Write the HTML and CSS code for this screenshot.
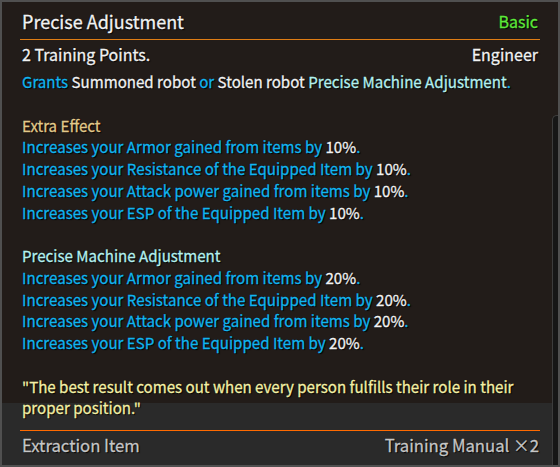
FILE: index.html
```html
<!DOCTYPE html>
<html lang="en">
<head>
  <meta charset="UTF-8" />
  <title>Precise Adjustment</title>
  <link rel="stylesheet" href="styles.css">
</head>
<body>
  <div class="tooltip">
    <div class="content">
      <div class="head">
        <span class="title">Precise Adjustment</span>
        <span class="grade">Basic</span>
      </div>
      <div class="sub">
        <span>2 Training Points.</span>
        <span>Engineer</span>
      </div>
      <div class="desc">
        <p><span class="blue">Grants</span> Summoned robot <span class="blue">or</span> Stolen robot <span class="mint">Precise Machine Adjustment</span><span class="blue">.</span></p>
        <p class="gap"></p>
        <p class="gold">Extra Effect</p>
        <p class="blue">Increases your Armor gained from items by <span class="white">10%</span>.</p>
        <p class="blue">Increases your Resistance of the Equipped Item by <span class="white">10%</span>.</p>
        <p class="blue">Increases your Attack power gained from items by <span class="white">10%</span>.</p>
        <p class="blue">Increases your ESP of the Equipped Item by <span class="white">10%</span>.</p>
        <p class="gap"></p>
        <p class="mint">Precise Machine Adjustment</p>
        <p class="blue">Increases your Armor gained from items by <span class="white">20%</span>.</p>
        <p class="blue">Increases your Resistance of the Equipped Item by <span class="white">20%</span>.</p>
        <p class="blue">Increases your Attack power gained from items by <span class="white">20%</span>.</p>
        <p class="blue">Increases your ESP of the Equipped Item by <span class="white">20%</span>.</p>
        <p class="gap"></p>
        <p class="quote">"The best result comes out when every person fulfills their role in their proper position."</p>
      </div>
      <div class="foot">
        <span>Extraction Item</span>
        <span>Training Manual ×2</span>
      </div>
    </div>
    <div class="scroll">
      <div class="thumb"></div>
    </div>
  </div>
</body>
</html>
```

FILE: styles.css
```css
body {
  margin: 0;
  background-color: #1a1a1a;
  font-family: "Noto Sans CJK KR", "Noto Sans", sans-serif;
}

.tooltip {
  box-sizing: border-box;
  width: 560px;
  height: 467px;
  border: 2px solid #505050;
  background-color: #221c19;
  display: flex;
  color: #f2f2f2;
  text-shadow: 1px 1px 1px #000, 0 0 1px #000;
  -webkit-text-stroke: 0.3px currentColor;
}

.content {
  flex: 1;
  padding: 0 12px 0 18px;
  background: linear-gradient(#221c19 0 401px, #2a2a2a 401px);
}

.head {
  display: flex;
  justify-content: space-between;
  align-items: center;
  height: 36px;
  border-bottom: 1px solid #e07d14;
  padding: 1px 2px 0 2px;
}

.title {
  font-size: 18px;
}

.grade {
  font-size: 16px;
  color: #5ee83a;
}

.sub {
  display: flex;
  justify-content: space-between;
  font-size: 16px;
  line-height: 24px;
  padding: 2px 2px 0 2px;
}

.desc {
  font-size: 15.1px;
  line-height: 21.75px;
  padding: 5px 0 11px 2px;
}

.desc p {
  margin: 0;
}

.desc .gap {
  height: 21.75px;
}

.blue {
  color: #12b5f0;
}

.white {
  color: #f2f2f2;
}

.mint {
  color: #b4f0ee;
}

.gold {
  color: #e2c98a;
}

.quote {
  color: #f4f0a6;
}

.foot {
  display: flex;
  justify-content: space-between;
  border-top: 1px solid #ff6a00;
  font-size: 16.7px;
  line-height: 28px;
  padding: 0 1px 0 2px;
  color: #c6c6c6;
}

.scroll {
  width: 6px;
  padding-top: 113px;
}

.thumb {
  height: 100%;
  box-sizing: border-box;
  background-color: #161616;
  border-left: 1px solid #3c3c3c;
  border-top: 1px solid #3c3c3c;
  border-radius: 5px 0 0 0;
}
```
